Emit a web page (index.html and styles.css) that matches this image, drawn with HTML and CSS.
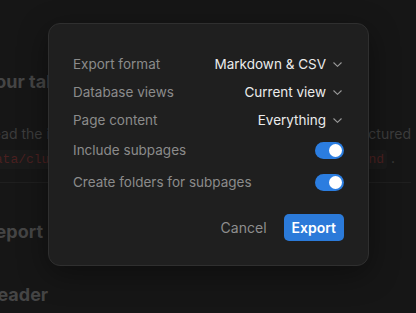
FILE: index.html
```html
<!DOCTYPE html>
<html lang="en">
<head>
  <meta charset="UTF-8" />
  <title>Export</title>
  <meta name="viewport" content="width=device-width, initial-scale=1" />
  <link rel="stylesheet" href="styles.css">
</head>
<body>
  <div class="page">
    <h2 class="page-title">Your table export</h2>
    <p class="page-text">
      <span>Read the instructions first, then load</span>
      <span>structured</span>
    </p>
    <p class="page-text code-line">
      <span><code>data/cluster/backend</code></span>
      <span><code>nd</code> .</span>
    </p>
    <hr class="rule" />
    <h2 class="page-title report">Report</h2>
    <h3 class="page-title header">Header</h3>
  </div>

  <div class="dialog">
    <div class="row">
      <span class="label">Export format</span>
      <span class="select">Markdown &amp; CSV
        <svg class="chev" width="9" height="5" viewBox="0 0 9 5"><path d="M0.5 0.5 L4.5 4.3 L8.5 0.5" /></svg>
      </span>
    </div>
    <div class="row">
      <span class="label">Database views</span>
      <span class="select">Current view
        <svg class="chev" width="9" height="5" viewBox="0 0 9 5"><path d="M0.5 0.5 L4.5 4.3 L8.5 0.5" /></svg>
      </span>
    </div>
    <div class="row">
      <span class="label">Page content</span>
      <span class="select">Everything
        <svg class="chev" width="9" height="5" viewBox="0 0 9 5"><path d="M0.5 0.5 L4.5 4.3 L8.5 0.5" /></svg>
      </span>
    </div>
    <div class="row row-toggle">
      <span class="label">Include subpages</span>
      <span class="toggle on"><span class="knob"></span></span>
    </div>
    <div class="row row-toggle">
      <span class="label">Create folders for subpages</span>
      <span class="toggle on"><span class="knob"></span></span>
    </div>

    <div class="actions">
      <button class="btn btn-cancel">Cancel</button>
      <button class="btn btn-export">Export</button>
    </div>
  </div>
</body>
</html>
```

FILE: styles.css
```css
html, body {
  margin: 0;
  padding: 0;
  height: 100%;
  overflow: hidden;
}

body {
  background: #161616;
  font-family: 'Inter', 'Noto Sans', sans-serif;
  position: relative;
}

/* dimmed page behind the dialog */
.page {
  margin-left: -16px;
  width: 427px;
  padding-top: 70px;
}

.page-title {
  margin: 0;
  font-size: 18px;
  font-weight: 700;
  line-height: 24px;
  color: #454545;
  white-space: nowrap;
}

.page-text {
  display: flex;
  justify-content: space-between;
  margin: 30px 0 0;
  font-size: 14px;
  line-height: 20px;
  color: #3c3c3c;
  white-space: nowrap;
}

.page-text.code-line {
  margin-top: 4px;
  padding-right: 16px;
}

.page-text code {
  font-family: 'Liberation Mono', monospace;
  font-size: 13px;
  color: #4a2020;
  background: #1a1a1a;
  padding: 2px 3px;
  border-radius: 3px;
}

.rule {
  border: 0;
  border-top: 1px solid #1f1f1f;
  margin: 12px 0 0;
}

.report {
  margin-top: 37px;
}

.header {
  margin-top: 39px;
}

/* export dialog */
.dialog {
  position: absolute;
  left: 48px;
  top: 23px;
  width: 321px;
  box-sizing: border-box;
  padding: 26px 24px 24px 24px;
  background: #1f1f1f;
  border: 1px solid #2f2f2f;
  border-radius: 12px;
  box-shadow: 0 8px 30px rgba(0, 0, 0, 0.4);
}

.row {
  display: flex;
  align-items: center;
  justify-content: space-between;
  height: 28px;
  font-size: 13.5px;
}

.row-toggle {
  height: 32px;
}

.label {
  color: #8b8b8b;
}

.select {
  display: flex;
  align-items: center;
  gap: 7px;
  color: #ebebeb;
  font-size: 13.5px;
  font-weight: 400;
  padding-right: 2px;
}

.chev {
  fill: none;
  stroke: #9a9a9a;
  stroke-width: 1.1;
  margin-top: 1px;
}

.toggle {
  display: flex;
  align-items: center;
  justify-content: flex-end;
  width: 29px;
  height: 17px;
  box-sizing: border-box;
  padding: 0 2px;
  border-radius: 9px;
  background: #2b7de0;
}

.knob {
  width: 13px;
  height: 13px;
  border-radius: 50%;
  background: #ffffff;
}

.actions {
  display: flex;
  justify-content: flex-end;
  align-items: center;
  gap: 17px;
  margin-top: 16px;
}

.btn {
  font-family: inherit;
  font-size: 14px;
  border: 0;
  cursor: pointer;
}

.btn-cancel {
  background: none;
  color: #8e8e8e;
  padding: 0;
}

.btn-export {
  height: 27px;
  padding: 0 8px;
  border-radius: 5px;
  background: #2b7ad9;
  color: #ffffff;
  font-weight: 600;
}
```
